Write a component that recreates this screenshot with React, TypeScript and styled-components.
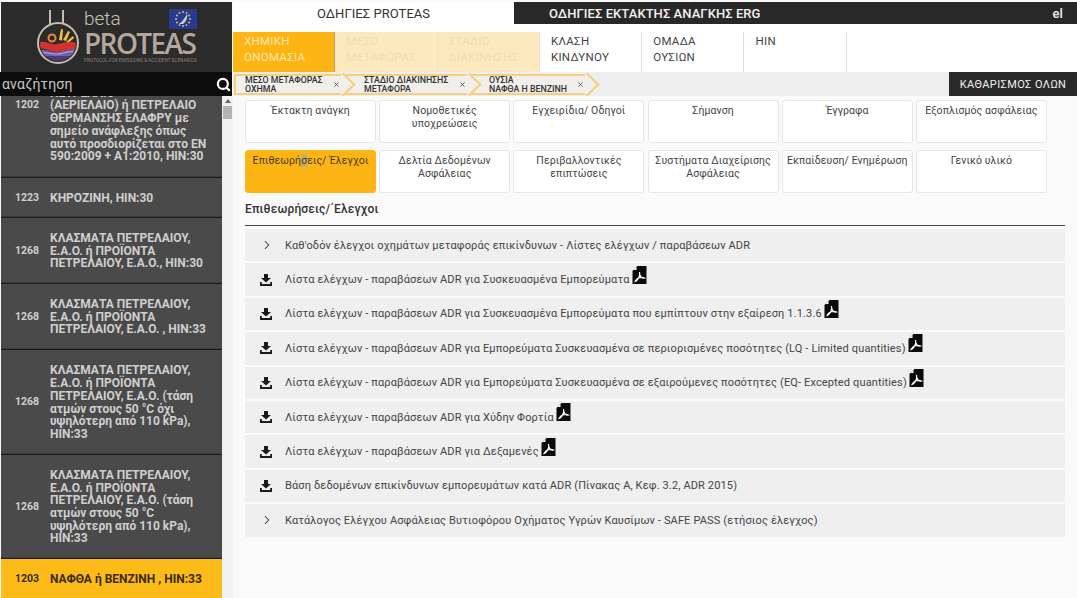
import React from "react";
import styled, { createGlobalStyle } from "styled-components";
import { ChevronRight, Search, X } from "lucide-react";

const Global = createGlobalStyle`
  html, body { margin: 0; padding: 0; background: #fafafa; }
  body { font-family: Roboto, "Liberation Sans", sans-serif; overflow: hidden; }
  * { box-sizing: border-box; }
`;

const Page = styled.div`
  display: flex;
  width: 1077px;
  height: 598px;
  overflow: hidden;
  padding-top: 2px;
  background: #fafafa;
`;
const Side = styled.aside`
  width: 233px;
  flex: none;
  display: flex;
  flex-direction: column;
  height: 596px;
`;
const Brand = styled.div`
  height: 70px;
  flex: none;
  margin-left: 1px;
  width: 231px;
  background: #2b2b2b;
  display: flex;
  padding: 6px 0 0 34px;
  gap: 3px;
`;
const BrandText = styled.div`
  display: flex;
  flex-direction: column;
  position: relative;
  width: 113px;
`;
const Beta = styled.div`
  font: 300 19px/20px Roboto, sans-serif;
  color: #c9c2b8;
  height: 20px;
  margin-top: 1px;
`;
const BrandName = styled.div`
  font: 600 28px/28px "Open Sans", Roboto, sans-serif;
  color: #b3a79e;
  letter-spacing: -1.6px;
  white-space: nowrap;
`;
const BrandSub = styled.div`
  font: 400 4.7px/5px Roboto, sans-serif;
  color: #8b8178;
  white-space: nowrap;
  margin-top: 1px;
`;
const Flag = styled.svg`
  position: absolute;
  top: 1px;
  right: 0;
`;
const SearchBar = styled.div`
  height: 24px;
  flex: none;
  width: 232px;
  background: #0c0c0c;
  color: #c8c8c8;
  display: flex;
  align-items: center;
  justify-content: space-between;
  padding: 0 1px 0 2px;
  font-size: 14px;
  letter-spacing: 0.2px;
`;
const ListWrap = styled.div`
  flex: 1;
  display: flex;
  min-height: 0;
  overflow: hidden;
`;
const List = styled.div`
  width: 221px;
  flex: none;
  margin-top: -25px;
  background: #1e1e1e;
  margin-left: 1px;
`;
const Item = styled.div<{ $h: number; $active?: boolean }>`
  height: ${(p) => p.$h}px;
  background: ${(p) => (p.$active ? "#fdbb1a" : "#4a4a4a")};
  color: ${(p) => (p.$active ? "#3a2a05" : "#cfcfcf")};
  display: flex;
  align-items: center;
  margin-bottom: 1px;
  border-bottom: 1px solid ${(p) => (p.$active ? "#fdbb1a" : "#3a3a3a")};
`;
const Code = styled.div<{ $lift?: number }>`
  width: 49px;
  flex: none;
  text-align: right;
  padding-right: 11px;
  margin-bottom: ${(p) => p.$lift ?? 0}px;
  font: 700 10.5px/13px Roboto, sans-serif;
`;
const Name = styled.div<{ $raise?: number }>`
  font: 700 12px/12.7px Roboto, sans-serif;
  width: 160px;
  white-space: pre-line;
  margin-top: 2px;
  margin-bottom: ${(p) => p.$raise ?? 0}px;
`;
const Scroll = styled.div`
  width: 11px;
  flex: none;
  display: flex;
  flex-direction: column;
  align-items: center;
  background: #f1f1f1;
  padding-top: 3px;
`;
const ScrollArrow = styled.div`
  width: 0;
  height: 0;
  border-left: 3px solid transparent;
  border-right: 3px solid transparent;
  border-bottom: 4px solid #666;
`;
const ScrollThumb = styled.div`
  width: 9px;
  height: 13px;
  margin-top: 3px;
  background: #b4b4b4;
`;

const Main = styled.main`
  flex: 1;
  min-width: 0;
  display: flex;
  flex-direction: column;
`;
const TopTabs = styled.div`
  height: 22px;
  flex: none;
  display: flex;
  font-size: 13px;
`;
const TopTab = styled.div<{ $dark?: boolean }>`
  width: ${(p) => (p.$dark ? 563 : 281)}px;
  background: ${(p) => (p.$dark ? "#282828" : "#fff")};
  color: ${(p) => (p.$dark ? "#f2f2f2" : "#333")};
  display: flex;
  align-items: center;
  letter-spacing: 0.05px;
  padding-left: ${(p) => (p.$dark ? 35 : 84)}px;
  padding-right: 14px;
  justify-content: space-between;
  font-weight: ${(p) => (p.$dark ? 500 : 400)};
`;
const NavRow = styled.div`
  height: 48px;
  flex: none;
  display: flex;
  align-items: flex-end;
  background: #fff;
`;
const NavTab = styled.div<{ $state?: "on" | "dis" }>`
  width: 102.3px;
  height: 40px;
  padding: 1px 0 0 11px;
  font-size: 11.5px;
  line-height: 16px;
  letter-spacing: 0.3px;
  background: ${(p) =>
    p.$state === "on" ? "#fdb515" : p.$state === "dis" ? "#fde9bf" : "#fff"};
  color: ${(p) =>
    p.$state === "on" ? "#fde7ae" : p.$state === "dis" ? "#eddcb5" : "#444"};
  border-right: 1px solid ${(p) => (p.$state === "on" ? "#c9a55b" : p.$state === "dis" ? "#f4e2bf" : "#ddd")};
`;
const Crumbs = styled.div`
  height: 24px;
  flex: none;
  display: flex;
  align-items: center;
  justify-content: space-between;
  background: #eeeeee;
  padding-left: 1px;
`;
const CrumbList = styled.div`
  display: flex;
`;
const Crumb = styled.div<{ $w: number; $pl: number; $z: number; $first?: boolean }>`
  position: relative;
  z-index: ${(p) => p.$z};
  width: ${(p) => p.$w}px;
  height: 21px;
  display: flex;
  align-items: center;
  justify-content: space-between;
  padding: 1px 5px 0 ${(p) => p.$pl}px;
  background: #f0efec;
  border-top: 2px solid #f7cf7c;
  border-bottom: 2px solid #f7cf7c;
  border-left: ${(p) => (p.$first ? "2px solid #f7cf7c" : "0")};
  color: #333;
  font: 500 8.8px/8.5px Roboto, sans-serif;
  white-space: nowrap;
  & > span, & > svg {
    position: relative;
    z-index: 1;
  }
  &:after {
    content: "";
    position: absolute;
    right: -6.5px;
    top: 0.5px;
    width: 15px;
    height: 15px;
    transform: rotate(45deg);
    border-top: 2px solid #f7cf7c;
    border-right: 2px solid #f7cf7c;
    background: #f0efec;
  }
`;
const ClearBtn = styled.div`
  width: 128px;
  height: 24px;
  background: #2a2a2a;
  color: #f0f0f0;
  font-size: 11px;
  letter-spacing: 0.4px;
  display: flex;
  align-items: center;
  justify-content: center;
`;
const Body = styled.div`
  padding: 4px 12px 0;
  flex: 1;
`;
const Cards = styled.div`
  display: grid;
  grid-template-columns: repeat(6, 131px);
  column-gap: 3.2px;
  row-gap: 7px;
  grid-auto-rows: 43px;
`;
const Card = styled.div<{ $on?: boolean }>`
  background: ${(p) => (p.$on ? "#fdb515" : "#fff")};
  border: 1px solid ${(p) => (p.$on ? "#fdb515" : "#e7e7e7")};
  border-radius: 3px;
  color: ${(p) => (p.$on ? "#4a3a10" : "#444")};
  text-align: center;
  font-size: 10.5px;
  line-height: 13px;
  letter-spacing: 0.1px;
  padding: 3px 2px 0;
`;
const CursorMark = styled.span`
  background: #c4ad78;
`;
const Title = styled.div`
  font-size: 12px;
  font-weight: 500;
  color: #333;
  height: 33px;
  padding-top: 8px;
  line-height: 16px;
  border-bottom: 1px solid #444;
  width: 820px;
  letter-spacing: 0.15px;
`;
const Rows = styled.div`
  width: 820px;
  padding-top: 3px;
`;
const Row = styled.div`
  height: 34.4px;
  display: flex;
  align-items: center;
  background: #efefef;
  border-bottom: 2px solid #fafafa;
  padding-left: 15px;
  font-size: 11px;
  letter-spacing: 0.14px;
  color: #444;
  white-space: nowrap;
`;
const RowIcon = styled.div`
  width: 25px;
  flex: none;
  display: flex;
  align-items: center;
`;
const Pdf = styled.svg`
  margin: -10px 0 0 2px;
  flex: none;
`;

const DownloadIcon = () => (
  <svg width="12" height="12" viewBox="0 0 12 12" style={{ display: "block" }}>
    <path d="M4 0h4v4h3L6 8.5 1 4h3z" fill="#1a1a1a" />
    <path d="M0 8h1.8v2h8.4V8H12v4H0z" fill="#1a1a1a" />
  </svg>
);
const PdfIcon = () => (
  <Pdf width="15" height="18" viewBox="0 0 14 18">
    <path d="M5 0h9v18H0V5z" fill="#0a0a0a" />
    <path d="M1 4l3-3v3z" fill="#fff" />
    <path
      d="M7 6c-.4 2 .6 4 1.600 5.200 1 .8 2.600 1 3.400.8-1.600-.8-5-.6-7.400.8C3.800 13.600 3 14.400 2.600 15.400c1.800-.6 3.600-3 4.600-6.400"
      stroke="#fff"
      strokeWidth="1.200"
      fill="none"
    />
  </Pdf>
);

const Logo = () => (
  <svg width="46" height="60" viewBox="0 0 46 60" style={{ flex: "none" }}>
    <defs>
      <clipPath id="flask">
        <circle cx="23" cy="35" r="18" />
      </clipPath>
    </defs>
    <path d="M15 2v15M28 2v15" stroke="#c7bcae" strokeWidth="2" fill="none" />
    <circle cx="23" cy="35" r="20" fill="#2b2b2b" stroke="#c7bcae" strokeWidth="2" />
    <g clipPath="url(#flask)">
      <rect x="0" y="16" width="46" height="42" fill="#2b2b2b" />
      <path d="M24 32l2-11 2 .5-1 11zM28 32l5-9 2 1-4 9zM31 34l7-6 1 2-6 5z" fill="#f2c43a" />
      <circle cx="17" cy="30" r="3.500" fill="none" stroke="#e8853a" strokeWidth="2" />
      <path d="M3 35c8-4 12 3 20 1s12-4 20 0v6c-8-3-13 2-21 2s-12-5-19-3z" fill="#d2322f" />
      <path d="M3 42c8-2 12 3 20 2s13-5 20-2v6H3z" fill="#7b5aa6" />
      <path d="M3 48h40v8H3z" fill="#4a3a78" />
      <path d="M6 45c8-1 12 2 18 1s10-3 16-2" stroke="#a9b6dc" strokeWidth="1" fill="none" />
    </g>
  </svg>
);

const EuFlag = () => (
  <Flag width="28" height="20" viewBox="0 0 28 20">
    <rect width="28" height="20" fill="#2a3a94" />
    <path d="M10 15c3-2 6-6 8-10 1 3-1 8-4 10z" fill="#d9d5b8" />
    {Array.from({ length: 12 }).map((_, i) => (
      <circle
        key={i}
        cx={14 + 7 * Math.cos((i * Math.PI) / 6)}
        cy={10 + 7 * Math.sin((i * Math.PI) / 6)}
        r="0.900"
        fill="#e5cf4a"
      />
    ))}
  </Flag>
);

const items: { h: number; code: string; name: string; lift?: number; raise?: number; active?: boolean }[] = [
  { h: 106, code: "1202", lift: 38, raise: 12, name: "ΚΑΥΣΙΜΟ ΝΤΙΖΕΛ ή ΠΕΤΡΕΛΑΙΟ\n(ΑΕΡΙΕΛΑΙΟ) ή ΠΕΤΡΕΛΑΙΟ\nΘΕΡΜΑΝΣΗΣ ΕΛΑΦΡΥ με\nσημείο ανάφλεξης όπως\nαυτό προσδιορίζεται στο EN\n590:2009 + A1:2010, HIN:30" },
  { h: 39, code: "1223", name: "ΚΗΡΟΖΙΝΗ, HIN:30" },
  { h: 65, code: "1268", name: "ΚΛΑΣΜΑΤΑ ΠΕΤΡΕΛΑΙΟΥ, Ε.Α.Ο. ή ΠΡΟΪΟΝΤΑ ΠΕΤΡΕΛΑΙΟΥ, Ε.Α.Ο., HIN:30" },
  { h: 65, code: "1268", name: "ΚΛΑΣΜΑΤΑ ΠΕΤΡΕΛΑΙΟΥ, Ε.Α.Ο. ή ΠΡΟΪΟΝΤΑ ΠΕΤΡΕΛΑΙΟΥ, Ε.Α.Ο. , HIN:33" },
  { h: 104, code: "1268", name: "ΚΛΑΣΜΑΤΑ ΠΕΤΡΕΛΑΙΟΥ, Ε.Α.Ο. ή ΠΡΟΪΟΝΤΑ ΠΕΤΡΕΛΑΙΟΥ, Ε.Α.Ο. (τάση ατμών στους 50 °C όχι υψηλότερη από 110 kPa), HIN:33" },
  { h: 103, code: "1268", name: "ΚΛΑΣΜΑΤΑ ΠΕΤΡΕΛΑΙΟΥ, Ε.Α.Ο. ή ΠΡΟΪΟΝΤΑ ΠΕΤΡΕΛΑΙΟΥ, Ε.Α.Ο. (τάση ατμών στους 50 °C υψηλότερη από 110 kPa), HIN:33" },
  { h: 39, code: "1203", name: "ΝΑΦΘΑ ή ΒΕΝΖΙΝΗ , HIN:33", active: true },
];

const cards = [
  "Έκτακτη ανάγκη", "Νομοθετικές υποχρεώσεις", "Εγχειρίδια/ Οδηγοί", "Σήμανση", "Έγγραφα", "Εξοπλισμός ασφάλειας",
  "Επιθεωρήσεις/ Έλεγχοι", "Δελτία Δεδομένων Ασφάλειας", "Περιβαλλοντικές επιπτώσεις", "Συστήματα Διαχείρισης Ασφάλειας", "Εκπαίδευση/ Ενημέρωση", "Γενικό υλικό",
];

const rows = [
  { t: "Καθ'οδόν έλεγχοι οχημάτων μεταφοράς επικίνδυνων - Λίστες ελέγχων / παραβάσεων ADR", kind: "open" },
  { t: "Λίστα ελέγχων - παραβάσεων ADR για Συσκευασμένα Εμπορεύματα", pdf: true },
  { t: "Λίστα ελέγχων - παραβάσεων ADR για Συσκευασμένα Εμπορεύματα που εμπίπτουν στην εξαίρεση 1.1.3.6", pdf: true },
  { t: "Λίστα ελέγχων - παραβάσεων ADR για Εμπορεύματα Συσκευασμένα σε περιορισμένες ποσότητες (LQ - Limited quantities)", pdf: true },
  { t: "Λίστα ελέγχων - παραβάσεων ADR για Εμπορεύματα Συσκευασμένα σε εξαιρούμενες ποσότητες (EQ- Excepted quantities)", pdf: true },
  { t: "Λίστα ελέγχων - παραβάσεων ADR για Χύδην Φορτία", pdf: true },
  { t: "Λίστα ελέγχων - παραβάσεων ADR για Δεξαμενές", pdf: true },
  { t: "Βάση δεδομένων επικίνδυνων εμπορευμάτων κατά ADR (Πίνακας Α, Κεφ. 3.2, ADR 2015)" },
  { t: "Κατάλογος Ελέγχου Ασφάλειας Βυτιοφόρου Οχήματος Υγρών Καυσίμων - SAFE PASS (ετήσιος έλεγχος)", kind: "open" },
];

export default function App() {
  return (
    <Page>
      <Global />
      <Side>
        <Brand>
          <Logo />
          <BrandText>
            <Beta>beta</Beta>
            <BrandName>PROTEAS</BrandName>
            <BrandSub>PROTOCOL FOR EMISSIONS &amp; ACCIDENT SCENARIOS</BrandSub>
            <EuFlag />
          </BrandText>
        </Brand>
        <SearchBar>
          αναζήτηση
          <Search size={15} strokeWidth={3.5} color="#fff" />
        </SearchBar>
        <ListWrap>
          <List>
            {items.map((it, i) => (
              <Item key={i} $h={it.h} $active={it.active}>
                <Code $lift={it.lift}>{it.code}</Code>
                <Name $raise={it.raise}>{it.name}</Name>
              </Item>
            ))}
          </List>
          <Scroll>
            <ScrollArrow />
            <ScrollThumb />
          </Scroll>
        </ListWrap>
      </Side>
      <Main>
        <TopTabs>
          <TopTab>ΟΔΗΓΙΕΣ PROTEAS</TopTab>
          <TopTab $dark>
            ΟΔΗΓΙΕΣ ΕΚΤΑΚΤΗΣ ΑΝΑΓΚΗΣ ERG
            <span>el</span>
          </TopTab>
        </TopTabs>
        <NavRow>
          <NavTab $state="on">ΧΗΜΙΚΗ<br />ΟΝΟΜΑΣΙΑ</NavTab>
          <NavTab $state="dis">ΜΕΣΟ<br />ΜΕΤΑΦΟΡΑΣ</NavTab>
          <NavTab $state="dis">ΣΤΑΔΙΟ<br />ΔΙΑΚΙΝΗΣΗΣ</NavTab>
          <NavTab>ΚΛΑΣΗ<br />ΚΙΝΔΥΝΟΥ</NavTab>
          <NavTab>ΟΜΑΔΑ<br />ΟΥΣΙΩΝ</NavTab>
          <NavTab>HIN</NavTab>
        </NavRow>
        <Crumbs>
          <CrumbList>
            <Crumb $w={111} $pl={9} $z={3} $first>
              <span>ΜΕΣΟ ΜΕΤΑΦΟΡΑΣ<br />ΟΧΗΜΑ</span>
              <X size={7} strokeWidth={2.500} />
            </Crumb>
            <Crumb $w={126} $pl={19} $z={2}>
              <span>ΣΤΑΔΙΟ ΔΙΑΚΙΝΗΣΗΣ<br />ΜΕΤΑΦΟΡΑ</span>
              <X size={7} strokeWidth={2.500} />
            </Crumb>
            <Crumb $w={118} $pl={18} $z={1}>
              <span>ΟΥΣΙΑ<br />ΝΑΦΘΑ Η ΒΕΝΖΙΝΗ</span>
              <X size={7} strokeWidth={2.500} />
            </Crumb>
          </CrumbList>
          <ClearBtn>ΚΑΘΑΡΙΣΜΟΣ ΟΛΩΝ</ClearBtn>
        </Crumbs>
        <Body>
          <Cards>
            {cards.map((c, i) => (
              <Card key={c} $on={i === 6}>
                {i === 6 ? (
                  <>Επιθεωρή<CursorMark>σ</CursorMark>εις/ Έλεγχοι</>
                ) : (
                  c
                )}
              </Card>
            ))}
          </Cards>
          <Title>Επιθεωρήσεις/΄Ελεγχοι</Title>
          <Rows>
            {rows.map((r, i) => (
              <Row key={i}>
                <RowIcon>
                  {r.kind === "open" ? <ChevronRight size={14} color="#333" strokeWidth={1.800} /> : <DownloadIcon />}
                </RowIcon>
                {r.t}
                {r.pdf && <PdfIcon />}
              </Row>
            ))}
          </Rows>
        </Body>
      </Main>
    </Page>
  );
}
